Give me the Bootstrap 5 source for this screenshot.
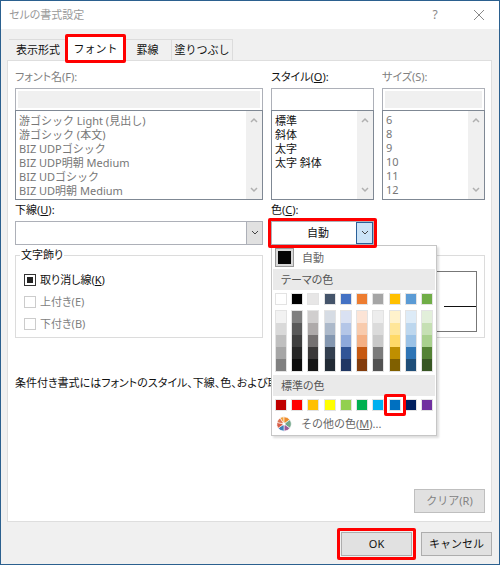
<!DOCTYPE html>
<html lang="ja">
<head>
<meta charset="utf-8">
<meta name="viewport" content="width=device-width, initial-scale=1">
<title>セルの書式設定</title>
<link href="https://cdn.jsdelivr.net/npm/bootstrap@5.3.0/dist/css/bootstrap.min.css" rel="stylesheet">
<style>
  body { font-family: "Noto Sans", "Noto Sans CJK JP", sans-serif; font-size: 11px; line-height: 14px; font-feature-settings: "palt"; color: #111; background: #f0f0f0; }
  .dialog { min-height: 100vh; border: 1px solid #2b608f; background: #f0f0f0; }
  .titlebar { height: 28px; background: #fff; padding: 0 14px 0 8px; color: #999; }
  .titlebar h1 { font-size: 11px; line-height: 14px; font-weight: 400; }
  .titlebar button { border: 0; background: none; padding: 0; color: #888; width: 12px; font-size: 12px; line-height: 14px; }
  .titlebar svg, .arrow { display: block; fill: none; stroke: currentColor; }
  .tabs { margin: 10px 8px 0; height: 21px; }
  .tabs button { border: 1px solid #dcdcdc; border-width: 1px 1px 0 0; background: #f0f0f0; padding: 0; color: #111; line-height: 14px; white-space: nowrap; }
  .tabs .on { background: #fff; align-self: stretch; margin-top: -3px; }
  .w-a { width: 59px; } .w-b { width: 56px; } .w-c { width: 48px; } .w-d { width: 61px; }
  .marked { position: relative; }
  .marked::after { content: ""; position: absolute; inset: -5px; border: 3px solid #f00; border-radius: 2px; pointer-events: none; z-index: 20; }
  .marked-tight::after { inset: -3px; }
  .marked-swatch::after { inset: -6px; }
  .sheet { margin: 0 7px 0 6px; border: 1px solid #dedede; background: #fff; padding: 9px 6px 8px 7px; }
  .fields { display: grid; grid-template-columns: minmax(0, 248fr) minmax(0, 103fr) minmax(0, 103fr); column-gap: 8px; }
  .fields label, .cap { display: block; line-height: 14px; margin-bottom: 4px; white-space: nowrap; }
  .second { margin-top: 3px; }
  .off { color: #808080; }
  .entry { display: block; width: 100%; height: 22px; border: 1px solid #adb0b8; border-bottom: 0; background: #fff; padding: 0 4px; border-radius: 0; }
  .entry:disabled { background: #f0f0f0; box-shadow: inset 0 0 0 2px #fff; }
  .listing { height: 90px; border: 1px solid #7f8894; background: #fff; }
  .listing select { border: 0; outline: 0; padding: 1px 0; background: #fff; color: #111; overflow: hidden; min-width: 0; height: 88px; border-radius: 0; }
  .listing select:disabled { color: #777; opacity: 1; }
  .listing option { padding: 0 3px; height: 14px; min-height: 14px; line-height: 14px; }
  .listing select:disabled option { color: #777; }
  .track { width: 16px; background: #f0f0f0; color: #b0b0b0; padding: 5px 0; }
  .combo { height: 24px; border: 1px solid #adb0b8; background: #fff; }
  .combo select { appearance: none; border: 0; background: #fff; min-width: 0; }
  .drop { width: 16px; background: #e1e1e1; color: #444; border-left: 1px solid #adb0b8; }
  .colorbtn { width: 103px; height: 24px; border: 1px solid #adb0b8; background: #fff; padding: 0; color: #111; line-height: 14px; }
  .colorbtn .drop { width: 17px; background: #cce4f7; border: 1px solid #2a6099; }
  .colorbtn.marked::after { inset: -4px; }
  fieldset.group { border: 1px solid #dcdcdc; height: 83px; margin-top: 10px; position: relative; min-width: 0; }
  .group legend { position: absolute; top: -8px; left: 4px; width: auto; background: #fff; padding: 0 1px; font-size: 11px; line-height: 14px; margin: 0; }
  .checks { padding: 17px 8px 0; gap: 8px; }
  .checks label { margin: 0; }
  .checks input { appearance: none; width: 12px; height: 12px; margin: 0; border: 1px solid #333; background: #fff; }
  .checks input:disabled { border-color: #ccc; }
  .checks input:checked { background: #222; box-shadow: inset 0 0 0 2px #fff; }
  .sample { height: 61px; margin: 15px 7px 0; border: 1px solid #777; padding: 0 0 0 7px; }
  .sample hr { margin: 9px 0 0 auto; width: 17%; border-top: 1px solid #111; opacity: 1; }
  .note { margin: 37px 0 0; padding: 0; line-height: 16px; white-space: nowrap; }
  .push { height: 24px; width: 71px; border: 1px solid #adadad; background: #e1e1e1; padding: 0; color: #111; line-height: 14px; }
  .push:disabled { color: #838383; border-color: #bfbfbf; }
  .footbar { padding: 10px 7px 8px; gap: 9px; }
  .palette { position: absolute; top: 24px; left: 0; display: block; width: 166px; min-width: 0; font-size: 12px; color: #666; border: 1px solid #c6c6c6; border-radius: 0; padding: 0 1px; box-shadow: 2px 2px 2px #0002; z-index: 10; background: #fff; }
  .palette .plain { border: 0; background: none; padding: 0 2px; color: #666; width: 100%; height: 23px; line-height: 14px; }
  .plain span + span, .plain svg + span { font-size: 11px; }
  .auto-chip { width: 19px; height: 19px; border: 1px solid #999; background: #050505; box-shadow: inset 0 0 0 2px #d8d8d8; }
  .band { height: 21px; background: #eaeaea; padding: 0 8px; color: #555; font-size: 11px; line-height: 21px; margin: 0; font-weight: 400; }
  .chips { padding: 3px 2px; }
  .chips button { width: 12px; height: 12px; border: 1px solid #e3e3e3; padding: 0; display: block; border-radius: 0; }
  .standard { padding-bottom: 1px; }
  .shades { padding: 2px 2px 3px; }
  .shades div { border: 1px solid #e3e3e3; width: 12px; }
  .shades button { width: 10px; height: 12px; border: 0; padding: 0; display: block; }
</style>
<script src="https://cdn.jsdelivr.net/npm/bootstrap@5.3.0/dist/js/bootstrap.bundle.min.js"></script>
</head>
<body>
<main class="dialog d-flex flex-column">
  <header class="titlebar d-flex align-items-center">
    <h1 class="m-0 me-auto">セルの書式設定</h1>
    <button type="button" class="me-4" aria-label="ヘルプ">?</button>
    <button type="button" class="ms-2" aria-label="閉じる"><svg width="12" height="12" viewBox="0 0 12 12"><path d="M1 1l10 10M11 1L1 11"/></svg></button>
  </header>
  <nav class="tabs d-flex" role="tablist">
    <button type="button" role="tab" class="w-a">表示形式</button>
    <button type="button" role="tab" class="w-b on marked marked-tight" aria-selected="true">フォント</button>
    <button type="button" role="tab" class="w-c">罫線</button>
    <button type="button" role="tab" class="w-d">塗りつぶし</button>
  </nav>
  <section class="sheet flex-grow-1 d-flex flex-column">
    <div class="fields">
      <div>
        <label for="fname" class="off">フォント名(F):</label>
        <input id="fname" class="entry" disabled>
        <div class="listing d-flex">
          <select size="6" class="flex-grow-1" aria-label="フォント名" disabled><option>游ゴシック Light (見出し)</option><option>游ゴシック (本文)</option><option>BIZ UDPゴシック</option><option>BIZ UDP明朝 Medium</option><option>BIZ UDゴシック</option><option>BIZ UD明朝 Medium</option></select>
          <div class="track d-flex flex-column justify-content-between align-items-center"><svg class="arrow" width="8" height="8" viewBox="0 0 8 8" stroke-width="1.5"><path d="M1 6l3-3 3 3"/></svg><svg class="arrow" width="8" height="8" viewBox="0 0 8 8" stroke-width="1.5"><path d="M1 2l3 3 3-3"/></svg></div>
        </div>
      </div>
      <div>
        <label for="fstyle">スタイル(<u>O</u>):</label>
        <input id="fstyle" class="entry">
        <div class="listing d-flex">
          <select size="6" class="flex-grow-1" aria-label="スタイル"><option>標準</option><option>斜体</option><option>太字</option><option>太字 斜体</option></select>
          <div class="track d-flex flex-column justify-content-between align-items-center"><svg class="arrow" width="8" height="8" viewBox="0 0 8 8" stroke-width="1.5"><path d="M1 6l3-3 3 3"/></svg><svg class="arrow" width="8" height="8" viewBox="0 0 8 8" stroke-width="1.5"><path d="M1 2l3 3 3-3"/></svg></div>
        </div>
      </div>
      <div>
        <label for="fsize" class="off">サイズ(S):</label>
        <input id="fsize" class="entry" disabled>
        <div class="listing d-flex">
          <select size="6" class="flex-grow-1" aria-label="サイズ" disabled><option>6</option><option>8</option><option>9</option><option>10</option><option>11</option><option>12</option></select>
          <div class="track d-flex flex-column justify-content-between align-items-center"><svg class="arrow" width="8" height="8" viewBox="0 0 8 8" stroke-width="1.5"><path d="M1 6l3-3 3 3"/></svg><svg class="arrow" width="8" height="8" viewBox="0 0 8 8" stroke-width="1.5"><path d="M1 2l3 3 3-3"/></svg></div>
        </div>
      </div>
    </div>
    <div class="fields second">
      <div>
        <label for="uline">下線(<u>U</u>):</label>
        <div class="combo d-flex">
          <select id="uline" class="flex-grow-1"><option></option></select>
          <span class="drop d-flex align-items-center justify-content-center"><svg class="arrow" width="8" height="8" viewBox="0 0 8 8"><path d="M1 2l3 3 3-3"/></svg></span>
        </div>
        <fieldset class="group">
          <legend>文字飾り</legend>
          <div class="checks d-flex flex-column">
            <div class="d-flex align-items-center gap-1"><input type="checkbox" id="strike" checked><label for="strike">取り消し線(<u>K</u>)</label></div>
            <div class="d-flex align-items-center gap-1"><input type="checkbox" id="sup" disabled><label for="sup" class="off">上付き(E)</label></div>
            <div class="d-flex align-items-center gap-1"><input type="checkbox" id="sub" disabled><label for="sub" class="off">下付き(B)</label></div>
          </div>
        </fieldset>
      </div>
      <div style="grid-column: 2 / 4">
        <span class="cap" id="colorcap">色(<u>C</u>):</span>
        <div class="dropdown">
          <button type="button" class="colorbtn d-flex marked" aria-labelledby="colorcap" aria-expanded="true"><span class="flex-grow-1 align-self-center ps-2">自動</span><span class="drop d-flex align-items-center justify-content-center align-self-stretch"><svg class="arrow" width="8" height="8" viewBox="0 0 8 8"><path d="M1 2l3 3 3-3"/></svg></span></button>
          <div class="palette dropdown-menu show">
            <button type="button" class="plain d-flex align-items-center gap-2"><span class="auto-chip"></span><span>自動</span></button>
            <h2 class="band">テーマの色</h2>
            <div class="chips d-flex justify-content-between" id="theme"></div>
            <div class="shades d-flex justify-content-between" id="shades"></div>
            <h2 class="band">標準の色</h2>
            <div class="chips standard d-flex justify-content-between" id="standard"></div>
            <button type="button" class="plain d-flex align-items-center gap-2"><svg width="18" height="18" viewBox="-9 -9 18 18" stroke="#fff" stroke-width="0.6"><path fill="#f2a23a" d="M0 0L-4-6A7.200 7.200 0 0 1 0-7.200z"/><path fill="#ed8b2b" d="M0 0V-7.200A7.200 7.200 0 0 1 5.800-4.200z"/><path fill="#74a68b" d="M0 0L5.800-4.200A7.200 7.200 0 0 1 5.800 4.200z"/><path fill="#9b5b9a" d="M0 0L5.800 4.200A7.200 7.200 0 0 1 0 7.200z"/><path fill="#3e7fbb" d="M0 0V7.200A7.200 7.200 0 0 1-5.800 4.200z"/><path fill="#d65c47" d="M0 0L-5.800 4.200A7.200 7.200 0 0 1-7-1.600z"/><path fill="#de7554" d="M0 0L-7-1.600A7.200 7.200 0 0 1-4-6z"/><circle r="1.200" fill="#fff"/></svg><span>その他の色(<u>M</u>)...</span></button>
          </div>
        </div>
        <fieldset class="group" aria-label="プレビュー"><div class="sample d-flex flex-column justify-content-center"><hr></div></fieldset>
      </div>
    </div>
    <p class="note">条件付き書式にはフォントのスタイル、下線、色、および取</p>
    <button type="button" class="push mt-auto align-self-end" disabled>クリア(R)</button>
  </section>
  <footer class="footbar d-flex justify-content-end">
    <button type="button" class="push marked">OK</button>
    <button type="button" class="push">キャンセル</button>
  </footer>
</main>
<script>
  const theme = ['#ffffff','#000000','#e7e6e6','#44546a','#4472c4','#ed7d31','#a5a5a5','#ffc000','#5b9bd5','#70ad47'];
  const shades = [
    ['#f2f2f2','#d9d9d9','#bfbfbf','#a6a6a6','#808080'],
    ['#7f7f7f','#595959','#3f3f3f','#262626','#0d0d0d'],
    ['#d0cece','#aeaaaa','#757171','#3a3838','#161616'],
    ['#d6dce4','#acb9ca','#8497b0','#333f4f','#222b35'],
    ['#d9e1f2','#b4c6e7','#8ea9db','#305496','#203764'],
    ['#fce4d6','#f8cbad','#f4b084','#c65911','#833c0c'],
    ['#ededed','#dbdbdb','#c9c9c9','#7b7b7b','#525252'],
    ['#fff2cc','#ffe699','#ffd966','#bf8f00','#806000'],
    ['#ddebf7','#bdd7ee','#9bc2e6','#2f75b5','#1f4e78'],
    ['#e2efda','#c6e0b4','#a9d08e','#548235','#375623']];
  const standard = ['#c00000','#ff0000','#ffc000','#ffff00','#92d050','#00b050','#00b0f0','#0070c0','#002060','#7030a0'];
  const chip = c => {
    const b = document.createElement('button');
    b.type = 'button';
    b.style.background = c;
    b.setAttribute('aria-label', c);
    return b;
  };
  document.getElementById('theme').append(...theme.map(chip));
  document.getElementById('standard').append(...standard.map(chip));
  document.getElementById('standard').children[7].classList.add('marked', 'marked-swatch');
  document.getElementById('shades').append(...shades.map(col => {
    const d = document.createElement('div');
    d.append(...col.map(chip));
    return d;
  }));
</script>
</body>
</html>
